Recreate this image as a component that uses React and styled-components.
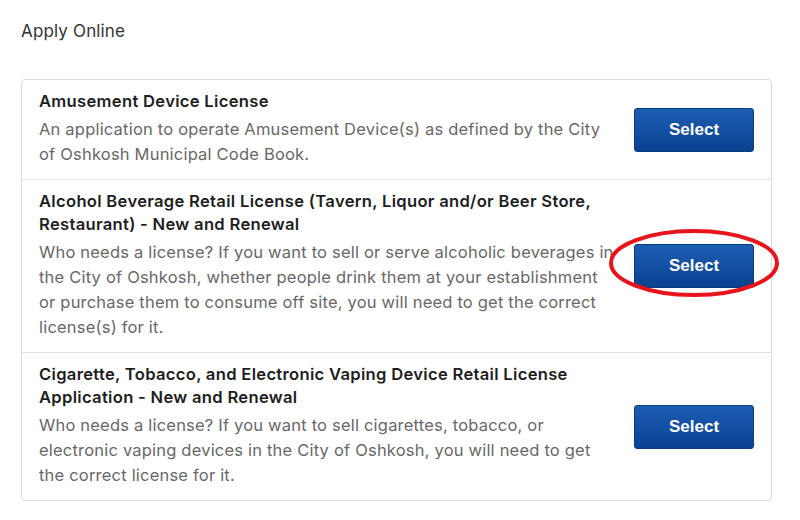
import React from "react";
import styled, { createGlobalStyle } from "styled-components";

const Global = createGlobalStyle`
  html, body { margin: 0; padding: 0; background: #ffffff; }
  body { font-family: Inter, "Open Sans", sans-serif; -webkit-font-smoothing: antialiased; }
`;

const Page = styled.div`
  padding: 18.5px 28px 0 21px;
  display: flex;
  flex-direction: column;
`;

const Heading = styled.h2`
  margin: 0 0 36.5px;
  font-family: Inter, sans-serif;
  font-weight: 400;
  font-size: 17px;
  letter-spacing: 0.15px;
  line-height: 24px;
  color: #333333;
`;

const Card = styled.div`
  width: 751px;
  box-sizing: border-box;
  border: 1px solid #dcdcdc;
  border-radius: 4px;
  display: flex;
  flex-direction: column;
`;

const Row = styled.div`
  display: flex;
  align-items: center;
  padding: 9.5px 17px 12.5px 17px;
  border-top: ${(p) => (p.$first ? "none" : "1px solid #e2e2e2")};
`;

const Text = styled.div`
  flex: 1;
  min-width: 0;
  display: flex;
  flex-direction: column;
  gap: 4px;
  white-space: nowrap;
`;

const Title = styled.div`
  font-family: Inter, sans-serif;
  font-weight: 600;
  font-size: 16.6px;
  letter-spacing: 0.3px;
  line-height: 23px;
  color: #1e1e1e;
`;

const Desc = styled.div`
  font-family: Inter, sans-serif;
  font-weight: 400;
  font-size: 16.5px;
  letter-spacing: 0.2px;
  line-height: 25px;
  color: #686868;
`;

const Action = styled.div`
  flex: none;
  margin: 3px 0 0 6px;
  position: relative;
  display: flex;
`;

const Button = styled.button`
  width: 120px;
  height: 44px;
  border: 1px solid #0a3a80;
  border-radius: 3px;
  background: linear-gradient(#1c5eb4, #0b4190);
  color: #ffffff;
  font-family: "Liberation Sans", Arial, sans-serif;
  font-weight: 700;
  font-size: 17px;
  cursor: pointer;
  padding: 0;
`;

const Circle = styled.svg`
  position: absolute;
  left: -25px;
  top: -15px;
  width: 170px;
  height: 68px;
  overflow: visible;
  pointer-events: none;
`;

const items = [
  {
    title: ["Amusement Device License"],
    desc: [
      "An application to operate Amusement Device(s) as defined by the City",
      "of Oshkosh Municipal Code Book.",
    ],
  },
  {
    title: [
      "Alcohol Beverage Retail License (Tavern, Liquor and/or Beer Store,",
      "Restaurant) - New and Renewal",
    ],
    desc: [
      "Who needs a license? If you want to sell or serve alcoholic beverages in",
      "the City of Oshkosh, whether people drink them at your establishment",
      "or purchase them to consume off site, you will need to get the correct",
      "license(s) for it.",
    ],
    circled: true,
  },
  {
    title: [
      "Cigarette, Tobacco, and Electronic Vaping Device Retail License",
      "Application - New and Renewal",
    ],
    desc: [
      "Who needs a license? If you want to sell cigarettes, tobacco, or",
      "electronic vaping devices in the City of Oshkosh, you will need to get",
      "the correct license for it.",
    ],
  },
];

const Lines = ({ lines }) =>
  lines.map((l, i) => (
    <React.Fragment key={i}>
      {i > 0 && <br />}
      {l}
    </React.Fragment>
  ));

export default function App() {
  return (
    <>
      <Global />
      <Page>
        <Heading>Apply Online</Heading>
        <Card>
          {items.map((it, i) => (
            <Row key={i} $first={i === 0}>
              <Text>
                <Title>
                  <Lines lines={it.title} />
                </Title>
                <Desc>
                  <Lines lines={it.desc} />
                </Desc>
              </Text>
              <Action>
                <Button>Select</Button>
                {it.circled && (
                  <Circle viewBox="0 0 170 68">
                    <ellipse cx="85" cy="34" rx="83" ry="32" fill="none" stroke="#e8141c" strokeWidth="4" />
                  </Circle>
                )}
              </Action>
            </Row>
          ))}
        </Card>
      </Page>
    </>
  );
}
